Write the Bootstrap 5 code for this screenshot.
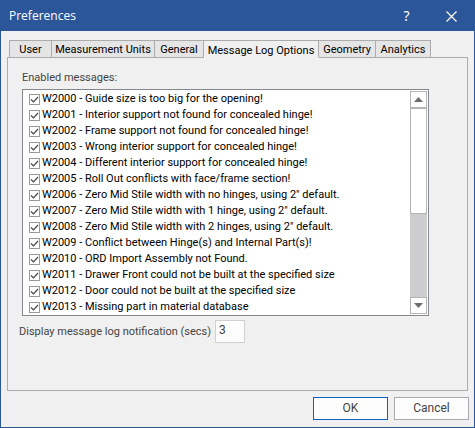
<!DOCTYPE html>
<html lang="en">
<head>
<meta charset="utf-8">
<meta name="viewport" content="width=device-width, initial-scale=1">
<title>Preferences</title>
<link href="https://cdn.jsdelivr.net/npm/bootstrap@5.3.0/dist/css/bootstrap.min.css" rel="stylesheet">
<style>
  body { font: 11px/16px Roboto, "Liberation Sans", Arial, sans-serif; color: #000; background: #f0f0f0; }
  .dialog { border: 1px solid #2b579a; }
  .titlebar { background: #2b579a; color: #fff; height: 30px; padding-left: 8px; font-family: "Noto Sans", sans-serif; }
  .titlebar h1 { font: 12px/16px "Open Sans", "Noto Sans", sans-serif; }
  .titlebar button { width: 45px; height: 30px; border: 0; padding: 0; background: none; color: #fff; font-size: 14px; }
  .main-area { padding: 9px 6px 7px; }
  .tabs { padding-left: 2px; border: 0; margin-bottom: -1px; }
  .tabs .nav-link { height: 18px; padding: 0; text-align: center; line-height: 15px; white-space: nowrap; color: #000; background: #e5e5e5; border: 1px solid #acacac; border-left-width: 0; border-radius: 0; margin: 0; }
  .tabs .nav-item:first-child .nav-link { border-left-width: 1px; }
  .tabs .nav-link.active { color: #000; background: #f0f0f0; border-color: #acacac; border-bottom-color: #f0f0f0; line-height: 19px; }
  .w-user { width: 43px; } .w-units { width: 103px; } .w-general { width: 49px; }
  .w-log { width: 115px; } .w-geometry { width: 57px; } .w-analytics { width: 55px; }
  .pane { border: 1px solid #acacac; padding: 12px 38px 47px 14px; }
  .muted { color: #444; }
  .messages { background: #fff; border: 1px solid #828790; margin-top: 3px; }
  .messages ul { padding: 1px 0 0 6px; }
  .messages li { height: 16px; gap: 2px; }
  .messages label { white-space: nowrap; }
  .messages .form-check-input { width: 11px; height: 11px; margin: 1px 0 0; border: 1px solid #999; border-radius: 0; background-color: #fff; background-size: 11px 11px; }
  .messages .form-check-input:checked { border-color: #999; background-color: #fff; background-image: url("data:image/svg+xml,%3Csvg xmlns='http://www.w3.org/2000/svg' viewBox='0 0 11 11'%3E%3Cpath d='M2 5.5 4.5 8 9 3' fill='none' stroke='%23444' stroke-width='1.2'/%3E%3C/svg%3E"); }
  .scroller { width: 17px; margin: 1px; background: #cdcdcd; }
  .scroller button { height: 17px; padding: 0; border: 1px solid #b5b5b5; background: #fff; }
  .scroller .thumb { height: 106px; border: 1px solid #b5b5b5; background: #fff; }
  .scroller svg, .titlebar svg { display: block; margin: auto; }
  .seconds { margin: 4px 0 0 -3px; gap: 4px; }
  .seconds input { width: 30px; height: 23px; padding: 0 3px 3px; border: 1px solid #d0d0d0; border-radius: 0; background: #fdfdfd; color: #444; font-size: 12px; }
  .actions { gap: 6px; margin: 6px -1px 0 0; }
  .actions .btn { width: 75px; height: 23px; padding: 0; font-size: 12px; line-height: 21px; color: #444; background: #fdfdfd; border: 1px solid #ababab; border-radius: 0; }
  .actions .btn-default { border-color: #0a62c0; }
</style>
<script src="https://cdn.jsdelivr.net/npm/bootstrap@5.3.0/dist/js/bootstrap.bundle.min.js"></script>
</head>
<body>
<div class="dialog min-vh-100">
  <header class="titlebar d-flex align-items-center">
    <h1 class="m-0 me-auto fw-normal">Preferences</h1>
    <button type="button" aria-label="Help">?</button>
    <button type="button" aria-label="Close"><svg width="11" height="11" viewBox="0 0 11 11"><path d="M.5.5l10 10M10.5.5l-10 10" stroke="#fff" stroke-width="1.2"/></svg></button>
  </header>
  <main class="main-area">
    <ul class="nav nav-tabs tabs flex-nowrap" role="tablist">
      <li class="nav-item"><button class="nav-link w-user" type="button" role="tab">User</button></li>
      <li class="nav-item"><button class="nav-link w-units" type="button" role="tab">Measurement Units</button></li>
      <li class="nav-item"><button class="nav-link w-general" type="button" role="tab">General</button></li>
      <li class="nav-item"><button class="nav-link w-log active" type="button" role="tab" aria-selected="true">Message Log Options</button></li>
      <li class="nav-item"><button class="nav-link w-geometry" type="button" role="tab">Geometry</button></li>
      <li class="nav-item"><button class="nav-link w-analytics" type="button" role="tab">Analytics</button></li>
    </ul>
    <section class="pane" role="tabpanel">
      <div class="muted" id="list-title">Enabled messages:</div>
      <div class="messages d-flex">
        <ul class="list-unstyled flex-grow-1 m-0" aria-labelledby="list-title">
          <li class="d-flex align-items-center"><input class="form-check-input" type="checkbox" id="w2000" checked><label for="w2000">W2000 - Guide size is too big for the opening!</label></li>
          <li class="d-flex align-items-center"><input class="form-check-input" type="checkbox" id="w2001" checked><label for="w2001">W2001 - Interior support not found for concealed hinge!</label></li>
          <li class="d-flex align-items-center"><input class="form-check-input" type="checkbox" id="w2002" checked><label for="w2002">W2002 - Frame support not found for concealed hinge!</label></li>
          <li class="d-flex align-items-center"><input class="form-check-input" type="checkbox" id="w2003" checked><label for="w2003">W2003 - Wrong interior support for concealed hinge!</label></li>
          <li class="d-flex align-items-center"><input class="form-check-input" type="checkbox" id="w2004" checked><label for="w2004">W2004 - Different interior support for concealed hinge!</label></li>
          <li class="d-flex align-items-center"><input class="form-check-input" type="checkbox" id="w2005" checked><label for="w2005">W2005 - Roll Out conflicts with face/frame section!</label></li>
          <li class="d-flex align-items-center"><input class="form-check-input" type="checkbox" id="w2006" checked><label for="w2006">W2006 - Zero Mid Stile width with no hinges, using 2" default.</label></li>
          <li class="d-flex align-items-center"><input class="form-check-input" type="checkbox" id="w2007" checked><label for="w2007">W2007 - Zero Mid Stile width with 1 hinge, using 2" default.</label></li>
          <li class="d-flex align-items-center"><input class="form-check-input" type="checkbox" id="w2008" checked><label for="w2008">W2008 - Zero Mid Stile width with 2 hinges, using 2" default.</label></li>
          <li class="d-flex align-items-center"><input class="form-check-input" type="checkbox" id="w2009" checked><label for="w2009">W2009 - Conflict between Hinge(s) and Internal Part(s)!</label></li>
          <li class="d-flex align-items-center"><input class="form-check-input" type="checkbox" id="w2010" checked><label for="w2010">W2010 - ORD Import Assembly not Found.</label></li>
          <li class="d-flex align-items-center"><input class="form-check-input" type="checkbox" id="w2011" checked><label for="w2011">W2011 - Drawer Front could not be built at the specified size</label></li>
          <li class="d-flex align-items-center"><input class="form-check-input" type="checkbox" id="w2012" checked><label for="w2012">W2012 - Door could not be built at the specified size</label></li>
          <li class="d-flex align-items-center"><input class="form-check-input" type="checkbox" id="w2013" checked><label for="w2013">W2013 - Missing part in material database</label></li>
        </ul>
        <div class="scroller d-flex flex-column">
          <button type="button" aria-label="Scroll up"><svg width="9" height="5" viewBox="0 0 9 5"><path d="M0 5 4.500 0 9 5z" fill="#6d6d6d"/></svg></button>
          <div class="thumb"></div>
          <button class="mt-auto" type="button" aria-label="Scroll down"><svg width="9" height="5" viewBox="0 0 9 5"><path d="M0 0h9L4.500 5z" fill="#6d6d6d"/></svg></button>
        </div>
      </div>
      <div class="seconds d-flex align-items-center">
        <label class="muted" for="secs">Display message log notification (secs)</label>
        <input type="text" id="secs" value="3">
      </div>
    </section>
    <div class="actions d-flex justify-content-end">
      <button class="btn btn-default" type="button">OK</button>
      <button class="btn" type="button">Cancel</button>
    </div>
  </main>
</div>
</body>
</html>
